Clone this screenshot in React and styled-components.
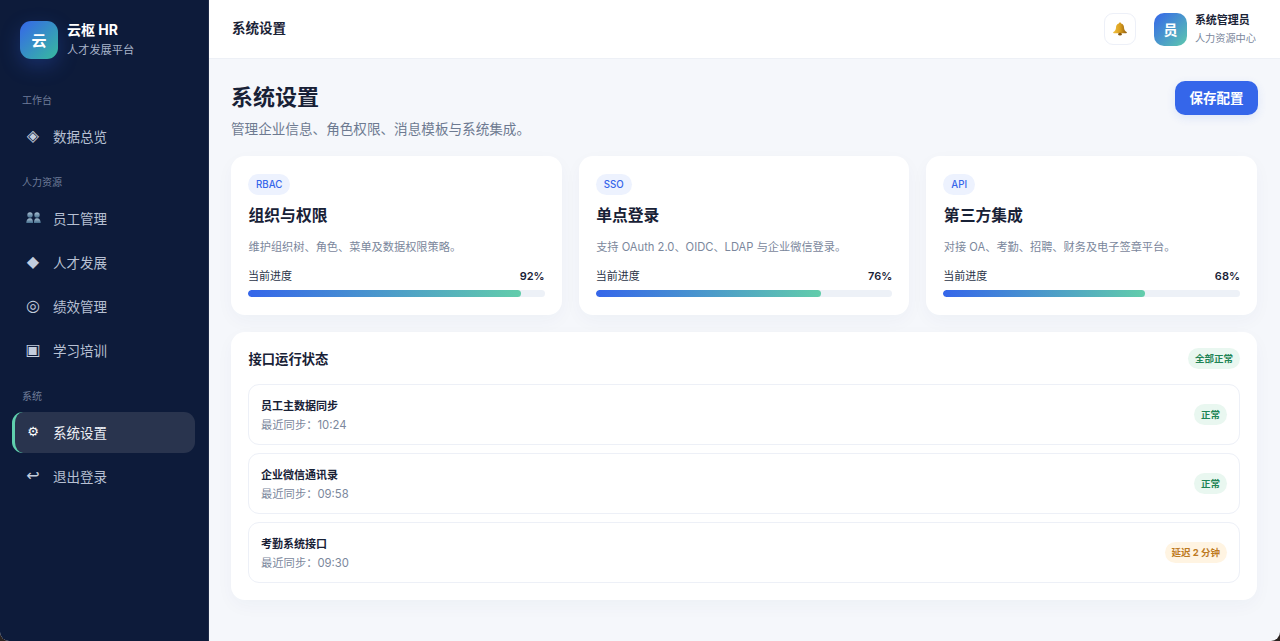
import React from "react";
import styled, { createGlobalStyle } from "styled-components";

const Global = createGlobalStyle`
  html, body, #root { margin: 0; padding: 0; height: 100%; }
  body { font-family: Inter, "Noto Sans CJK SC", "Liberation Sans", sans-serif; background: #2a2320; overflow: hidden; }
  * { box-sizing: border-box; }
`;

const Shell = styled.div`
  display: flex;
  width: 1280px;
  height: 641px;
  background: #f5f7fb;
  border-radius: 0 0 9px 9px;
  overflow: hidden;
`;

const Sidebar = styled.aside`
  width: 209px;
  flex: none;
  background: #0d1b3a;
  border-right: 1px solid #1f2b48;
  padding: 21px 13px 0 12px;
  display: flex;
  flex-direction: column;
`;

const Brand = styled.div`
  display: flex;
  align-items: center;
  gap: 9px;
  padding-left: 8px;
  height: 37px;
`;

const Logo = styled.div`
  width: 38px;
  height: 38px;
  border-radius: 11px;
  background: linear-gradient(135deg, #3566ea, #37bb9e);
  box-shadow: 0 7px 20px rgba(53, 102, 234, 0.28);
  color: #fff;
  font-size: 15px;
  font-weight: 700;
  display: flex;
  align-items: center;
  justify-content: center;
`;

const BrandText = styled.div`
  display: flex;
  flex-direction: column;
  gap: 3px;
`;

const BrandName = styled.div`
  color: #fff;
  font-size: 14px;
  line-height: 18px;
  font-weight: 700;
`;

const BrandSub = styled.div`
  color: #a9b4ca;
  font-size: 11.2px;
  line-height: 16px;
`;

const SectionLabel = styled.div`
  color: #6f7d99;
  font-size: 10px;
  line-height: 14px;
  padding-left: 10px;
  margin: ${(p) => p.$mt}px 0 ${(p) => p.$mb}px;
`;

const NavItem = styled.div`
  height: 41px;
  flex: none;
  margin-bottom: 3px;
  display: flex;
  align-items: center;
  padding-left: 12px;
  padding-bottom: 2px;
  gap: 11px;
  border-radius: 11px;
  color: ${(p) => (p.$active ? "#eef1f7" : "#b7c0d3")};
  font-size: 13.5px;
  background: ${(p) => (p.$active ? "#29344e" : "transparent")};
  border-left: 3px solid ${(p) => (p.$active ? "#5fd0ae" : "transparent")};
`;

const NavIcon = styled.span`
  width: 18px;
  height: 18px;
  margin-left: -3px;
  flex: none;
  display: flex;
  align-items: center;
  justify-content: center;
  color: ${(p) => (p.$active ? "#ffffff" : "#c3cddd")};
  font-family: "DejaVu Sans", sans-serif;
  font-size: ${(p) => p.$size || 16}px;
  line-height: 1;
`;

const NavText = styled.span``;

const Main = styled.main`
  flex: 1;
  min-width: 0;
  display: flex;
  flex-direction: column;
`;

const Topbar = styled.header`
  height: 59px;
  flex: none;
  background: #fff;
  border-bottom: 1px solid #edf0f6;
  display: flex;
  align-items: center;
  padding: 0 24px 0 23px;
`;

const TopTitle = styled.div`
  font-size: 13.5px;
  line-height: 18px;
  padding-bottom: 2px;
  font-weight: 600;
  color: #1a2336;
  flex: 1;
`;

const BellBox = styled.div`
  width: 32px;
  height: 32px;
  border-radius: 9px;
  border: 1px solid #edf0f8;
  background: #fff;
  display: flex;
  align-items: center;
  justify-content: center;
  margin-right: 18px;
`;

const Avatar = styled.div`
  width: 33px;
  height: 33px;
  border-radius: 10px;
  background: linear-gradient(135deg, #3566ea, #5dc8ae);
  color: #fff;
  font-size: 14px;
  font-weight: 600;
  display: flex;
  align-items: center;
  justify-content: center;
  margin-right: 8px;
`;

const UserInfo = styled.div`
  display: flex;
  flex-direction: column;
  gap: 3px;
`;

const UserName = styled.div`
  font-size: 11px;
  line-height: 15px;
  font-weight: 600;
  color: #1a2336;
`;

const UserDept = styled.div`
  font-size: 10.2px;
  line-height: 14px;
  color: #7b879c;
`;

const Content = styled.div`
  padding: 21px 23px 0 22px;
  display: flex;
  flex-direction: column;
`;

const PageHead = styled.div`
  display: flex;
  justify-content: space-between;
  align-items: flex-start;
  height: 76px;
`;

const PageTitle = styled.h1`
  margin: 1px 0 0;
  font-size: 22px;
  line-height: 33px;
  font-weight: 700;
  color: #182136;
`;

const PageSub = styled.p`
  margin: 6px 0 0;
  font-size: 13.6px;
  line-height: 18px;
  color: #6d7a91;
`;

const SaveButton = styled.button`
  width: 83px;
  height: 34px;
  margin: 1px -1px 0 0;
  padding: 0 0 2px;
  border: 0;
  border-radius: 10px;
  background: #3566ea;
  color: #fff;
  font: inherit;
  font-size: 13.5px;
  font-weight: 600;
  box-shadow: 0 3px 10px rgba(53, 102, 234, 0.12);
`;

const Cards = styled.div`
  display: grid;
  grid-template-columns: repeat(3, 1fr);
  gap: 17px;
`;

const Card = styled.section`
  height: 159px;
  border-radius: 14px;
  background: #fff;
  box-shadow: 0 6px 18px rgba(30, 50, 100, 0.035);
  padding: 18px 17px 0;
`;

const Tag = styled.div`
  width: fit-content;
  height: 21px;
  padding: 0 8px;
  border-radius: 11px;
  background: #edf2fe;
  color: #3566ea;
  font-size: 9.7px;
  line-height: 21px;
  font-weight: 500;
`;

const CardTitle = styled.h3`
  margin: 10px 0 0 0.5px;
  font-size: 15.8px;
  line-height: 22px;
  font-weight: 600;
  color: #182136;
`;

const CardDesc = styled.p`
  margin: 12px 0 0 0.5px;
  font-size: 11.2px;
  line-height: 16px;
  color: #7b879c;
`;

const ProgressHead = styled.div`
  display: flex;
  justify-content: space-between;
  margin-top: 13px;
  font-size: 11px;
  line-height: 16px;
  color: #2a3347;
`;

const Percent = styled.span`
  font-weight: 600;
  color: #182136;
`;

const Track = styled.div`
  height: 7px;
  margin-top: 6px;
  border-radius: 4px;
  background: #edf1f7;
  overflow: hidden;
`;

const Fill = styled.div`
  height: 100%;
  border-radius: 4px;
  background: linear-gradient(90deg, #3566ea, #62cdab);
`;

const Panel = styled.section`
  margin-top: 17px;
  height: 268px;
  border-radius: 14px;
  background: #fff;
  box-shadow: 0 6px 18px rgba(30, 50, 100, 0.035);
  padding: 17px;
`;

const PanelHead = styled.div`
  display: flex;
  justify-content: space-between;
  align-items: center;
  height: 21px;
  margin-bottom: 15px;
  margin-top: -1px;
`;

const PanelTitle = styled.h3`
  margin: 0 0 0 0.5px;
  font-size: 13.3px;
  font-weight: 600;
  color: #182136;
`;

const Pill = styled.span`
  height: 21px;
  padding: 0 7px;
  border-radius: 11px;
  background: ${(p) => (p.$warn ? "#fff4e2" : "#e9f7f0")};
  color: ${(p) => (p.$warn ? "#bd7a1f" : "#1f8455")};
  font-size: 9.5px;
  line-height: 21px;
  font-weight: 700;
`;

const Rows = styled.div`
  display: flex;
  flex-direction: column;
  gap: 8.7px;
`;

const Row = styled.div`
  height: 60.5px;
  border: 1px solid #edf0f7;
  border-radius: 11px;
  padding: 0 12px;
  display: flex;
  justify-content: space-between;
  align-items: center;
`;

const RowText = styled.div`
  display: flex;
  flex-direction: column;
  gap: 3px;
  padding-top: 2px;
`;

const RowTitle = styled.div`
  font-size: 11px;
  line-height: 16px;
  font-weight: 600;
  color: #182136;
`;

const RowSub = styled.div`
  font-size: 11.3px;
  line-height: 16px;
  color: #7b879c;
`;

const Bell = () => (
  <svg width="16" height="14" viewBox="0 0 16 14">
    <defs>
      <linearGradient id="bellGold" x1="0" x2="1" y1="0" y2="0">
        <stop offset="0" stopColor="#f0c040" />
        <stop offset="0.5" stopColor="#dba01f" />
        <stop offset="1" stopColor="#8f5c10" />
      </linearGradient>
    </defs>
    <path d="M8 .4c.7 0 1.100.4 1.100 1 2 .5 2.800 2 2.900 4 .1 2.100.9 3.400 2.600 4.600.5.400.2 1.200-.4 1.200H1.800c-.6 0-.9-.8-.4-1.200C3.100 8.800 3.900 7.500 4 5.400c.1-2 .9-3.500 2.900-4 0-.6.400-1 1.100-1z" fill="url(#bellGold)" />
    <ellipse cx="8" cy="12.200" rx="1.800" ry="1.400" fill="#8a5a10" />
  </svg>
);

const People = () => (
  <svg width="15" height="12" viewBox="0 0 15 12">
    <defs>
      <linearGradient id="peopleFill" x1="0" x2="0" y1="0" y2="1">
        <stop offset="0" stopColor="#a9bfd2" />
        <stop offset="1" stopColor="#46708f" />
      </linearGradient>
    </defs>
    <circle cx="4" cy="3" r="2.700" fill="url(#peopleFill)" />
    <circle cx="11" cy="3" r="2.700" fill="url(#peopleFill)" />
    <path d="M.3 11c0-3 1.300-4.800 3.700-4.800S7 8 7 11zM8 11c0-3 .7-4.800 3-4.800s3.700 1.800 3.700 4.800z" fill="url(#peopleFill)" />
  </svg>
);

const nav1 = [{ icon: "◈", label: "数据总览" }];
const nav2 = [
  { icon: <People />, label: "员工管理" },
  { icon: "◆", label: "人才发展" },
  { icon: "◎", label: "绩效管理" },
  { icon: "▣", label: "学习培训" },
];

const cards = [
  { tag: "RBAC", title: "组织与权限", desc: "维护组织树、角色、菜单及数据权限策略。", pct: 92 },
  { tag: "SSO", title: "单点登录", desc: "支持 OAuth 2.0、OIDC、LDAP 与企业微信登录。", pct: 76 },
  { tag: "API", title: "第三方集成", desc: "对接 OA、考勤、招聘、财务及电子签章平台。", pct: 68 },
];

const rows = [
  { title: "员工主数据同步", time: "最近同步：10:24", status: "正常" },
  { title: "企业微信通讯录", time: "最近同步：09:58", status: "正常" },
  { title: "考勤系统接口", time: "最近同步：09:30", status: "延迟 2 分钟", warn: true },
];

const Item = ({ icon, label, active, size }) => (
  <NavItem $active={active}>
    <NavIcon $size={size} $active={active}>{icon}</NavIcon>
    <NavText>{label}</NavText>
  </NavItem>
);

export default function App() {
  return (
    <Shell>
      <Global />
      <Sidebar>
        <Brand>
          <Logo>云</Logo>
          <BrandText>
            <BrandName>云枢 HR</BrandName>
            <BrandSub>人才发展平台</BrandSub>
          </BrandText>
        </Brand>
        <SectionLabel $mt={35} $mb={9}>工作台</SectionLabel>
        {nav1.map((n) => <Item key={n.label} {...n} />)}
        <SectionLabel $mt={15} $mb={9}>人力资源</SectionLabel>
        {nav2.map((n) => <Item key={n.label} {...n} />)}
        <SectionLabel $mt={15} $mb={9}>系统</SectionLabel>
        <Item icon="⚙" label="系统设置" active size={13} />
        <Item icon="↩" label="退出登录" />
      </Sidebar>
      <Main>
        <Topbar>
          <TopTitle>系统设置</TopTitle>
          <BellBox><Bell /></BellBox>
          <Avatar>员</Avatar>
          <UserInfo>
            <UserName>系统管理员</UserName>
            <UserDept>人力资源中心</UserDept>
          </UserInfo>
        </Topbar>
        <Content>
          <PageHead>
            <div>
              <PageTitle>系统设置</PageTitle>
              <PageSub>管理企业信息、角色权限、消息模板与系统集成。</PageSub>
            </div>
            <SaveButton>保存配置</SaveButton>
          </PageHead>
          <Cards>
            {cards.map((c) => (
              <Card key={c.tag}>
                <Tag>{c.tag}</Tag>
                <CardTitle>{c.title}</CardTitle>
                <CardDesc>{c.desc}</CardDesc>
                <ProgressHead>
                  <span>当前进度</span>
                  <Percent>{c.pct}%</Percent>
                </ProgressHead>
                <Track><Fill style={{ width: `${c.pct}%` }} /></Track>
              </Card>
            ))}
          </Cards>
          <Panel>
            <PanelHead>
              <PanelTitle>接口运行状态</PanelTitle>
              <Pill>全部正常</Pill>
            </PanelHead>
            <Rows>
              {rows.map((r) => (
                <Row key={r.title}>
                  <RowText>
                    <RowTitle>{r.title}</RowTitle>
                    <RowSub>{r.time}</RowSub>
                  </RowText>
                  <Pill $warn={r.warn}>{r.status}</Pill>
                </Row>
              ))}
            </Rows>
          </Panel>
        </Content>
      </Main>
    </Shell>
  );
}
